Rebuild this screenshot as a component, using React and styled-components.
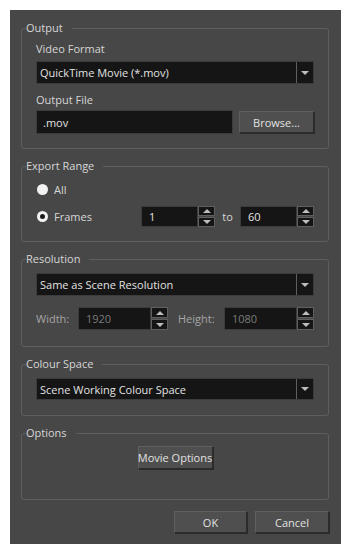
import React from 'react'
import styled, { createGlobalStyle } from 'styled-components'

const GlobalStyle = createGlobalStyle`
  body {
    margin: 0;
    background: #ffffff;
    font-family: 'Open Sans', 'Noto Sans', sans-serif;
    font-size: 11px;
  }
`

const Window = styled.div`
  margin: 10px;
  width: 331px;
  height: 534px;
  box-sizing: border-box;
  background: #474747;
  color: #d6d6d6;
  padding: 11px 12px 0 11px;
  display: flex;
  flex-direction: column;
  gap: 10px;
`

const Group = styled.fieldset`
  margin: 0;
  border: 1px solid #5e5e5e;
  border-radius: 3px;
  padding: ${(p) => p.$top || 6}px 14px ${(p) => p.$bottom || 14}px 14px;
  display: flex;
  flex-direction: column;
  min-width: 0;
`

const Legend = styled.legend`
  margin-left: -10px;
  padding: 0 9px 0 0;
  line-height: 14px;
  color: #d6d6d6;
`

const Label = styled.div`
  line-height: 16px;
  margin-top: ${(p) => p.$top || 0}px;
  margin-bottom: ${(p) => p.$bottom || 0}px;
`

const Select = styled.div`
  display: flex;
  height: ${(p) => p.$h || 23}px;
  background: #151515;
  border: 1px solid #3c3c3c;
  box-sizing: border-box;
`

const SelectText = styled.div`
  flex: 1;
  padding-left: 3px;
  display: flex;
  align-items: center;
  color: #e2e2e2;
`

const ArrowBox = styled.div`
  width: 16px;
  border-left: 1px solid #5f5f5f;
  display: flex;
  align-items: center;
  justify-content: center;
`

const Row = styled.div`
  display: flex;
  align-items: center;
  gap: ${(p) => p.$gap || 0}px;
  margin-top: ${(p) => p.$top || 0}px;
`

const TextInput = styled.div`
  flex: 1;
  height: 24px;
  box-sizing: border-box;
  background: #151515;
  border: 1px solid #3c3c3c;
  padding-left: 6px;
  display: flex;
  align-items: center;
  color: #e2e2e2;
`

const Button = styled.div`
  width: ${(p) => p.$w}px;
  height: ${(p) => p.$h || 22}px;
  box-sizing: border-box;
  background: #4f4f4f;
  border: 1px solid #2c2c2c;
  border-top-color: #5f5f5f;
  border-left-color: #5f5f5f;
  box-shadow: 1px 1px 0 #2a2a2a;
  display: flex;
  align-items: center;
  justify-content: center;
  white-space: nowrap;
  color: #e2e2e2;
`

const Radio = styled.span`
  width: 11px;
  height: 11px;
  border-radius: 50%;
  box-sizing: border-box;
  background: ${(p) => (p.$filled ? '#f2f2f2' : '#1a1a1a')};
  border: ${(p) => (p.$filled ? '0' : '3px solid #f2f2f2')};
  margin-left: 1px;
  margin-right: 6px;
`

const RadioRow = styled.div`
  display: flex;
  align-items: center;
  height: 21px;
  margin-top: ${(p) => p.$top || 0}px;
`

const RadioLabel = styled.span`
  width: 87px;
`

const Spin = styled.div`
  display: flex;
  width: ${(p) => p.$w}px;
  height: ${(p) => p.$h}px;
`

const SpinField = styled.div`
  flex: 1;
  background: #151515;
  border: 1px solid #3c3c3c;
  box-sizing: border-box;
  padding-left: 7px;
  display: flex;
  align-items: center;
  color: ${(p) => (p.$disabled ? '#7c7c7c' : '#e2e2e2')};
`

const SpinButtons = styled.div`
  width: 17px;
  display: flex;
  flex-direction: column;
  gap: 1px;
`

const SpinButton = styled.div`
  flex: 1;
  background: #151515;
  border: 1px solid #5f5f5f;
  display: flex;
  align-items: center;
  justify-content: center;
`

const Small = styled.span`
  color: ${(p) => (p.$disabled ? '#a6a6a6' : '#d6d6d6')};
  width: ${(p) => p.$w}px;
  padding-left: ${(p) => p.$pad || 0}px;
  box-sizing: border-box;
  text-align: ${(p) => p.$align || 'left'};
`

const Footer = styled.div`
  display: flex;
  justify-content: flex-end;
  gap: 8px;
  margin-top: 1px;
`

const Center = styled.div`
  display: flex;
  justify-content: center;
`

const Down = () => (
  <svg width="8" height="4" viewBox="0 0 8 4">
    <path d="M0 0 H8 L4 4 Z" fill="#bdbdbd" />
  </svg>
)

const Up = () => (
  <svg width="8" height="4" viewBox="0 0 8 4">
    <path d="M0 4 H8 L4 0 Z" fill="#bdbdbd" />
  </svg>
)

const Dropdown = ({ children, h }) => (
  <Select $h={h}>
    <SelectText>{children}</SelectText>
    <ArrowBox>
      <Down />
    </ArrowBox>
  </Select>
)

const SpinBox = ({ value, w, h, disabled }) => (
  <Spin $w={w} $h={h}>
    <SpinField $disabled={disabled}>{value}</SpinField>
    <SpinButtons>
      <SpinButton>
        <Up />
      </SpinButton>
      <SpinButton>
        <Down />
      </SpinButton>
    </SpinButtons>
  </Spin>
)

export default function App() {
  return (
    <>
      <GlobalStyle />
      <Window>
        <Group>
          <Legend>Output</Legend>
          <Label $bottom={4}>Video Format</Label>
          <Dropdown>QuickTime Movie (*.mov)</Dropdown>
          <Label $top={8} $bottom={2}>Output File</Label>
          <Row $gap={6}>
            <TextInput>.mov</TextInput>
            <Button $w={75}>Browse...</Button>
          </Row>
        </Group>

        <Group>
          <Legend>Export Range</Legend>
          <RadioRow>
            <Radio $filled />
            <span>All</span>
          </RadioRow>
          <RadioRow $top={6}>
            <Radio />
            <RadioLabel>Frames</RadioLabel>
            <SpinBox value="1" w={74} h={21} />
            <Small $w={25} $align="center">to</Small>
            <SpinBox value="60" w={74} h={21} />
          </RadioRow>
        </Group>

        <Group $top={7} $bottom={16}>
          <Legend>Resolution</Legend>
          <Dropdown>Same as Scene Resolution</Dropdown>
          <Row $top={11}>
            <Small $disabled $w={42}>Width:</Small>
            <SpinBox value="1920" w={90} h={23} disabled />
            <Small $disabled $w={56} $pad={10}>Height:</Small>
            <SpinBox value="1080" w={90} h={23} disabled />
          </Row>
        </Group>

        <Group $top={7} $bottom={15}>
          <Legend>Colour Space</Legend>
          <Dropdown h={22}>Scene Working Colour Space</Dropdown>
        </Group>

        <Group $bottom={30}>
          <Legend>Options</Legend>
          <Center>
            <Button $w={75} $h={23}>Movie Options</Button>
          </Center>
        </Group>

        <Footer>
          <Button $w={73}>OK</Button>
          <Button $w={74}>Cancel</Button>
        </Footer>
      </Window>
    </>
  )
}
